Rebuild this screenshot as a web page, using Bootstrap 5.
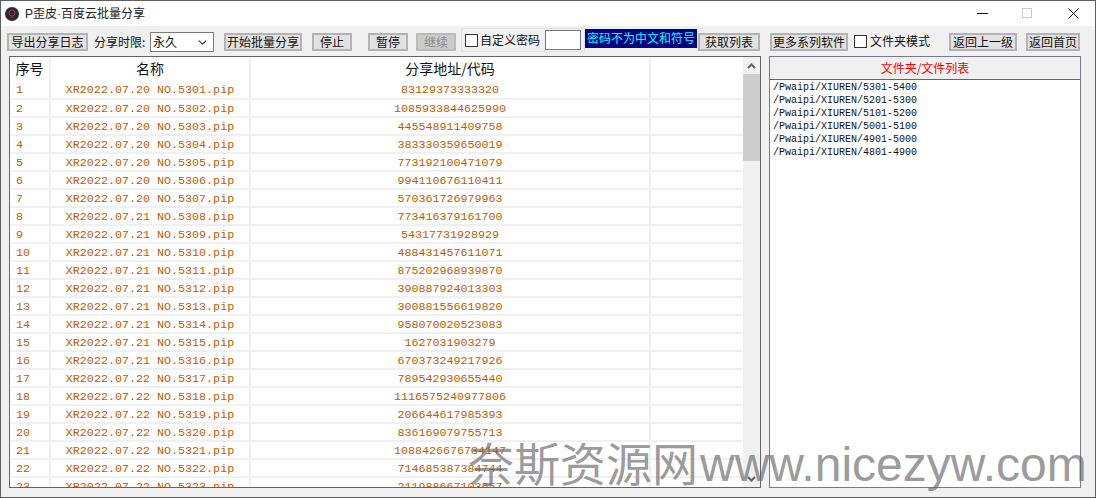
<!DOCTYPE html>
<html lang="zh">
<head>
<meta charset="utf-8">
<title>P歪皮·百度云批量分享</title>
<link href="https://cdn.jsdelivr.net/npm/bootstrap@5.3.0/dist/css/bootstrap.min.css" rel="stylesheet">
<style>
html,body{margin:0;height:498px;overflow:hidden;background:#f0f0f0;}
body{font-family:"Noto Sans CJK SC","Liberation Sans",sans-serif;font-size:12px;color:#111;}
.app-win{width:1096px;height:498px;border:1px solid #5f5f5f;background:#f0f0f0;position:relative;overflow:hidden;}
.title-bar{height:25px;background:#fff;padding-left:4px;}
.title-ico{flex:0 0 14px;width:14px;height:14px;margin-right:6px;}
.title-txt{font-family:"Liberation Sans","Noto Sans CJK SC",sans-serif;font-size:12px;line-height:1;color:#222;}
.ctl{width:46px;height:25px;}
.ctl-min{margin-left:auto;margin-right:-1px;}
.ctl-close{margin-right:-1px;margin-left:0;}
.ctl-max{margin-right:0;}
.tool-bar{height:30px;padding-left:6px;}
.btn.wbtn{height:18px;margin-top:7px;padding:0;border:2px solid #b4b4b4;border-radius:0;background:#e1e1e1;color:#111;font-size:12px;line-height:14px;white-space:nowrap;}
.btn.wbtn:disabled{background:#ccc;color:#8a8a8a;opacity:1;border-color:#bbb;}
.lbl{margin-top:7px;line-height:18px;white-space:nowrap;}
.form-select.sel{width:64px;height:20px;margin:6px 0 0 2px;padding:0 0 0 2px;border:1px solid #7a7a7a;border-radius:0;font-size:12px;line-height:18px;color:#111;background-position:right 5px center;background-size:11px 9px;}
.pw-box{width:124px;height:24px;margin:2px 0 0 5px;border:1px solid #e3e3e3;padding-left:3px;}
.form-check-input.cb{width:13px;height:13px;margin:0;border:1px solid #333;border-radius:0;background-color:#fff;flex:none;}
.form-control.pw-in{width:36px;height:20px;margin-left:5px;padding:0;border:1px solid #7a7a7a;border-radius:0;}
.pw-note{width:112px;height:19px;margin-top:3px;background:#000080;color:#0ff;line-height:18px;text-align:center;white-space:nowrap;}
.btn.wbtn.i1{width:81px;}
.lbl.i2{margin-left:6px;width:54px;}
.btn.wbtn.i4{margin-left:10px;width:78px;}
.btn.wbtn.i5{margin-left:10px;width:40px;}
.btn.wbtn.i6{margin-left:16px;width:40px;}
.btn.wbtn.i7{margin-left:8px;width:40px;}
.btn.wbtn.i10{margin-left:1px;width:62px;}
.btn.wbtn.i11{margin-left:10px;width:78px;}
.form-check-input.cb.i12{margin-left:6px;margin-top:9px;}
.lbl.i13{margin-left:3px;margin-top:6px;width:60px;}
.btn.wbtn.i14{margin-left:19px;width:68px;}
.btn.wbtn.i15{margin-left:9px;width:54px;}
.pw-lbl{margin-left:2px;width:60px;line-height:1;}
.main-area{padding-left:8px;height:432px;gap:8px;}
.tbl-panel{width:752px;height:432px;border:1px solid #646464;background:#fff;overflow:hidden;}
.tbl-scroll{width:734px;overflow:hidden;}
.table.data-t{table-layout:fixed;width:734px;margin:0;--bs-table-bg:#fff;font-family:"Liberation Mono",monospace;font-size:11.7px;color:#bf5c00;}
.data-t th{height:24px;padding:0 0 3px;font-family:"Noto Sans CJK SC",sans-serif;font-size:14px;font-weight:400;color:#111;text-align:center;line-height:20px;border:0;border-right:2px solid #f0f0f0;}
.data-t th:last-child{border-right:0;}
.data-t td{height:18px;padding:2px 0 0;line-height:14px;text-align:center;color:#bf5c00;border:0;border-bottom:2px solid #f0f0f0;border-right:2px solid #f0f0f0;white-space:nowrap;overflow:hidden;}
.data-t td:last-child{border-right:0;}
.data-t td:first-child{text-align:left;padding-left:6px;}
.c1{width:40px;}.c2{width:200px;}.c3{width:400px;}
.s-bar{width:17px;background:#f0f0f0;}
.s-arr{height:17px;}
.s-thumb{height:87px;background:#cdcdcd;}
.list-panel{width:312px;height:432px;border:1px solid #7a7a86;background:#fff;}
.list-head{height:23px;background:#f0f0f0;color:#f00;text-align:center;line-height:22px;border-bottom:1px solid #646464;}
.list-body{padding:1px 3px 0;font-family:"Liberation Mono",monospace;font-size:10px;line-height:13px;color:#111;}
.wm{position:absolute;left:467px;top:429px;white-space:nowrap;color:rgba(105,105,105,.68);line-height:62px;pointer-events:none;font-family:"Liberation Sans",sans-serif;font-size:48px;}
.wm-cn{font-family:"Noto Sans CJK SC",sans-serif;font-size:46px;margin-right:2px;}
</style>
</head>
<body>
<div class="app-win d-flex flex-column">
  <div class="title-bar d-flex align-items-center">
    <svg class="title-ico" viewBox="0 0 14 14"><circle cx="7" cy="7" r="7" fill="#2b2a3a"/><circle cx="7" cy="6" r="3" fill="none" stroke="#a33" stroke-width="1"/><path d="M7 9v2" stroke="#a33"/></svg>
    <span class="title-txt">P歪皮·百度云批量分享</span>
    <div class="ctl ctl-min d-flex align-items-center justify-content-center"><svg width="11" height="11" viewBox="0 0 11 11"><path d="M0 5.5h11" stroke="#111"/></svg></div>
    <div class="ctl ctl-max d-flex align-items-center justify-content-center"><svg width="11" height="11" viewBox="0 0 11 11"><rect x=".5" y=".5" width="9" height="9" fill="none" stroke="#ccc"/></svg></div>
    <div class="ctl ctl-close d-flex align-items-center justify-content-center"><svg width="11" height="11" viewBox="0 0 11 11"><path d="M.5.5l10 10M10.5.5l-10 10" stroke="#111"/></svg></div>
  </div>

  <div class="tool-bar d-flex align-items-start">
    <button type="button" class="btn wbtn i1">导出分享日志</button>
    <span class="lbl i2">分享时限:</span>
    <select class="form-select sel"><option>永久</option></select>
    <button type="button" class="btn wbtn i4">开始批量分享</button>
    <button type="button" class="btn wbtn i5">停止</button>
    <button type="button" class="btn wbtn i6">暂停</button>
    <button type="button" class="btn wbtn i7" disabled>继续</button>
    <div class="pw-box d-flex align-items-center">
      <input class="form-check-input cb" type="checkbox" aria-label="自定义密码">
      <span class="pw-lbl">自定义密码</span>
      <input class="form-control pw-in" type="text" aria-label="密码">
    </div>
    <div class="pw-note">密码不为中文和符号</div>
    <button type="button" class="btn wbtn i10">获取列表</button>
    <button type="button" class="btn wbtn i11">更多系列软件</button>
    <input class="form-check-input cb i12" type="checkbox" aria-label="文件夹模式">
    <span class="lbl i13">文件夹模式</span>
    <button type="button" class="btn wbtn i14">返回上一级</button>
    <button type="button" class="btn wbtn i15">返回首页</button>
  </div>

  <div class="main-area d-flex">
    <div class="tbl-panel d-flex justify-content-between">
      <div class="tbl-scroll">
        <table class="table data-t">
          <colgroup><col class="c1"><col class="c2"><col class="c3"><col></colgroup>
          <thead><tr><th>序号</th><th>名称</th><th>分享地址/代码</th><th></th></tr></thead>
          <tbody>
            <tr><td>1</td><td>XR2022.07.20 NO.5301.pip</td><td>83129373333320</td><td></td></tr>
            <tr><td>2</td><td>XR2022.07.20 NO.5302.pip</td><td>1085933844625990</td><td></td></tr>
            <tr><td>3</td><td>XR2022.07.20 NO.5303.pip</td><td>445548911409758</td><td></td></tr>
            <tr><td>4</td><td>XR2022.07.20 NO.5304.pip</td><td>383330359650019</td><td></td></tr>
            <tr><td>5</td><td>XR2022.07.20 NO.5305.pip</td><td>773192100471079</td><td></td></tr>
            <tr><td>6</td><td>XR2022.07.20 NO.5306.pip</td><td>994110676110411</td><td></td></tr>
            <tr><td>7</td><td>XR2022.07.20 NO.5307.pip</td><td>570361726979963</td><td></td></tr>
            <tr><td>8</td><td>XR2022.07.21 NO.5308.pip</td><td>773416379161700</td><td></td></tr>
            <tr><td>9</td><td>XR2022.07.21 NO.5309.pip</td><td>54317731928929</td><td></td></tr>
            <tr><td>10</td><td>XR2022.07.21 NO.5310.pip</td><td>488431457611071</td><td></td></tr>
            <tr><td>11</td><td>XR2022.07.21 NO.5311.pip</td><td>875202968939870</td><td></td></tr>
            <tr><td>12</td><td>XR2022.07.21 NO.5312.pip</td><td>390887924013303</td><td></td></tr>
            <tr><td>13</td><td>XR2022.07.21 NO.5313.pip</td><td>300881556619820</td><td></td></tr>
            <tr><td>14</td><td>XR2022.07.21 NO.5314.pip</td><td>958070020523083</td><td></td></tr>
            <tr><td>15</td><td>XR2022.07.21 NO.5315.pip</td><td>1627031903279</td><td></td></tr>
            <tr><td>16</td><td>XR2022.07.21 NO.5316.pip</td><td>670373249217926</td><td></td></tr>
            <tr><td>17</td><td>XR2022.07.22 NO.5317.pip</td><td>789542930655440</td><td></td></tr>
            <tr><td>18</td><td>XR2022.07.22 NO.5318.pip</td><td>1116575240977806</td><td></td></tr>
            <tr><td>19</td><td>XR2022.07.22 NO.5319.pip</td><td>206644617985393</td><td></td></tr>
            <tr><td>20</td><td>XR2022.07.22 NO.5320.pip</td><td>836169079755713</td><td></td></tr>
            <tr><td>21</td><td>XR2022.07.22 NO.5321.pip</td><td>1088426676734147</td><td></td></tr>
            <tr><td>22</td><td>XR2022.07.22 NO.5322.pip</td><td>714685387384744</td><td></td></tr>
            <tr><td>23</td><td>XR2022.07.22 NO.5323.pip</td><td>211988667103657</td><td></td></tr>
          </tbody>
        </table>
      </div>
      <div class="s-bar d-flex flex-column">
        <div class="s-arr d-flex align-items-center justify-content-center"><svg width="9" height="6" viewBox="0 0 9 6"><path d="M1 5l3.5-3.5L8 5" fill="none" stroke="#606060" stroke-width="2"/></svg></div>
        <div class="s-thumb"></div>
        <div class="flex-grow-1"></div>
        <div class="s-arr d-flex align-items-center justify-content-center"><svg width="9" height="6" viewBox="0 0 9 6"><path d="M1 1l3.5 3.5L8 1" fill="none" stroke="#606060" stroke-width="2"/></svg></div>
      </div>
    </div>
    <div class="list-panel d-flex flex-column">
      <div class="list-head">文件夹/文件列表</div>
      <div class="list-body">
        <div>/Pwaipi/XIUREN/5301-5400</div>
        <div>/Pwaipi/XIUREN/5201-5300</div>
        <div>/Pwaipi/XIUREN/5101-5200</div>
        <div>/Pwaipi/XIUREN/5001-5100</div>
        <div>/Pwaipi/XIUREN/4901-5000</div>
        <div>/Pwaipi/XIUREN/4801-4900</div>
      </div>
    </div>
  </div>
  <div class="wm"><span class="wm-cn">奈斯资源网</span>www.nicezyw.com</div>
</div>
<script src="https://cdn.jsdelivr.net/npm/bootstrap@5.3.0/dist/js/bootstrap.bundle.min.js"></script>
</body>
</html>
